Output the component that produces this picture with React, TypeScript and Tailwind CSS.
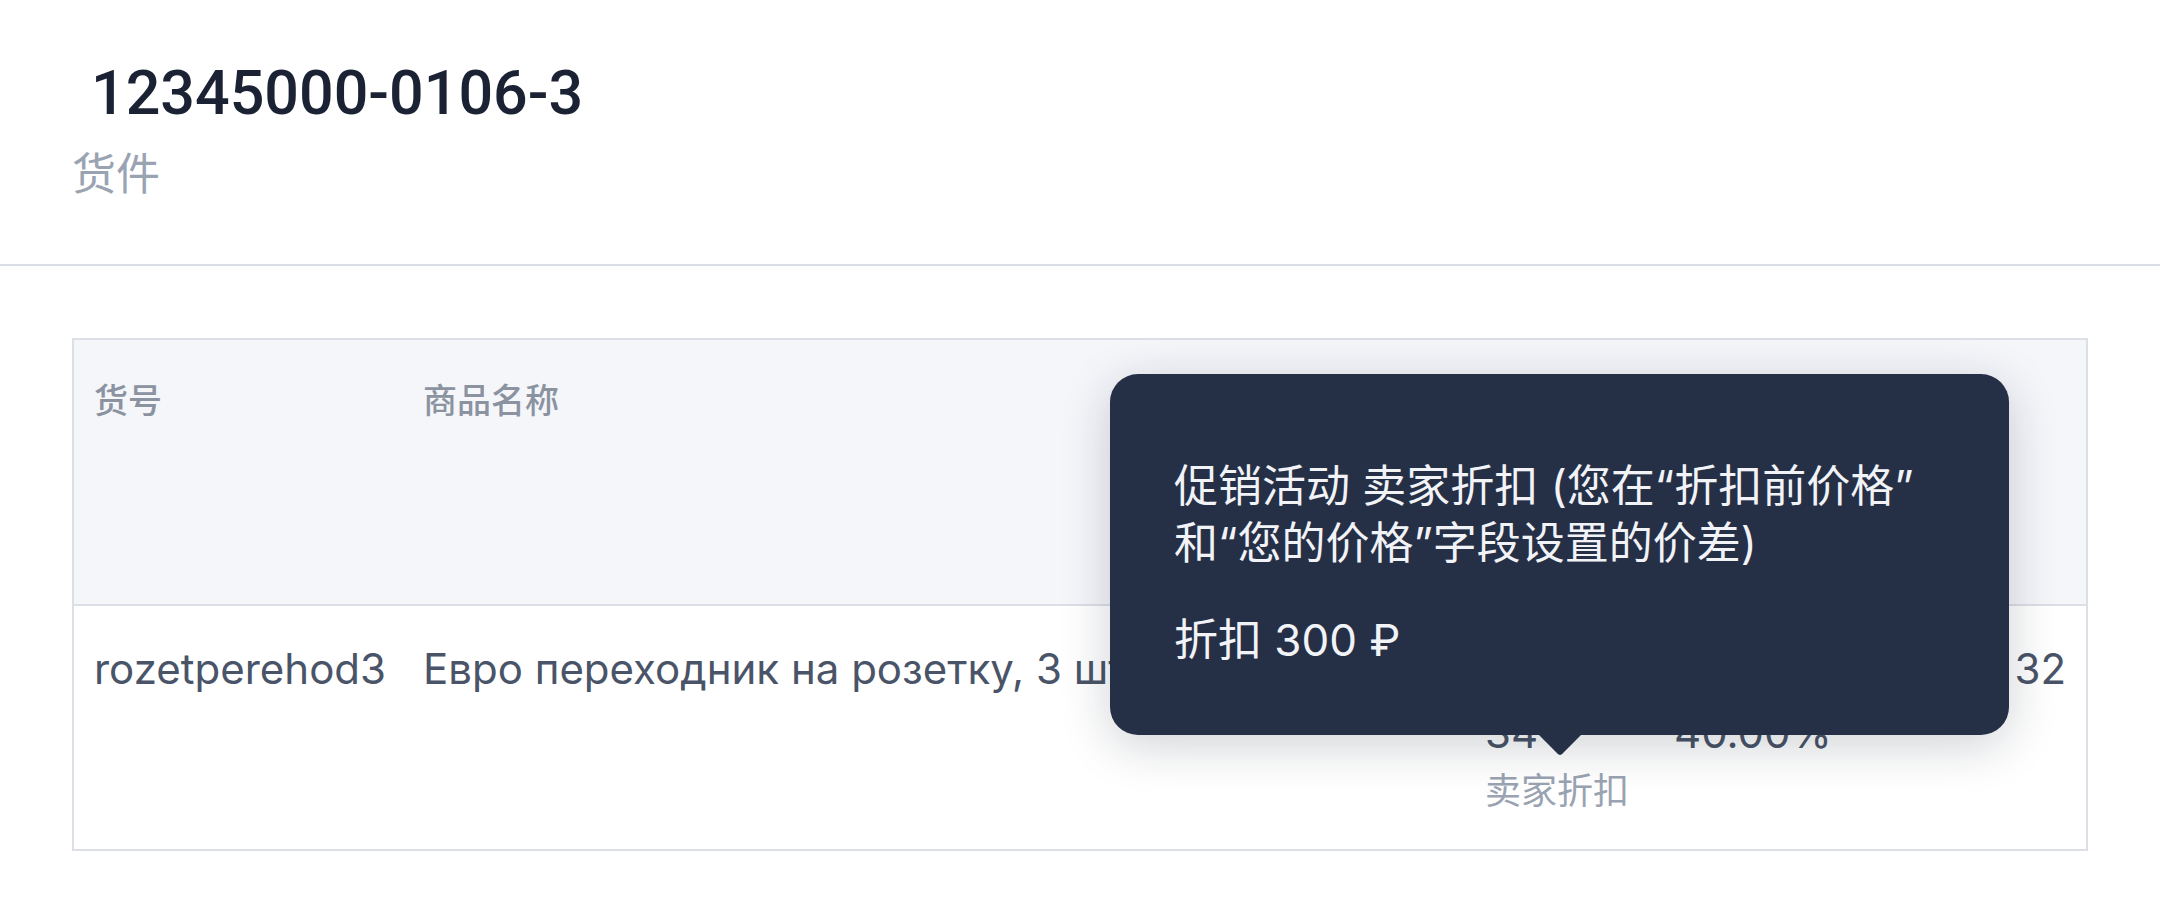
const columns = 'grid grid-cols-[329px_1062px_189px_1fr_186px]'

function Tooltip() {
  return (
    <div className="absolute left-[1036px] top-[34px] w-[899px] rounded-[28px] bg-[#253047] pt-[84px] pb-[66px] px-[64px] text-[44px] leading-[57px] text-[#f1f3f7] shadow-[0_10px_50px_rgba(15,23,42,0.2)]">
      <p className="mb-[40px]">
        促销活动 卖家折扣 (您在“折扣前价格”
        <br />
        和“您的价格”字段设置的价差)
      </p>
      <p>折扣 300 ₽</p>
      <svg
        className="absolute left-[428px] -bottom-[21px]"
        width="44"
        height="22"
        viewBox="0 0 44 22"
      >
        <path d="M0 0 L44 0 L24.6 19.6 Q22 22.2 19.4 19.6 Z" fill="#253047" />
      </svg>
    </div>
  )
}

export default function App() {
  return (
    <div className="min-h-screen bg-white font-['Inter','Noto_Sans_CJK_SC',sans-serif]">
      {/* Page header */}
      <header className="pt-[58px] pb-[60px] px-[72px] border-b-2 border-[#dadde6]">
        <h1 className="ml-[19px] font-['Roboto','Noto_Sans_CJK_SC',sans-serif] text-[61px] leading-[70px] font-medium text-[#1b2233]">
          12345000-0106-3
        </h1>
        <p className="mt-[16px] text-[44px] leading-[60px] text-[#9aa3b2]">货件</p>
      </header>

      {/* Items table */}
      <div className="relative mx-[72px] mt-[72px] border-2 border-[#dcdfe6]">
        <div
          className={`${columns} h-[266px] bg-[#f5f6fa] border-b-2 border-[#dcdfe6] pt-[37px] text-[34px] leading-[48px] font-medium text-[#8b93a1]`}
        >
          <div className="pl-[20px]">货号</div>
          <div className="pl-[20px]">商品名称</div>
          <div />
          <div />
          <div />
        </div>

        <div className={`${columns} h-[243px] text-[42px] leading-[56px] text-[#4a5468]`}>
          <div className="pl-[20px] pt-[35px]">rozetperehod3</div>
          <div className="pl-[20px] pt-[35px] whitespace-nowrap overflow-hidden">
            Евро переходник на розетку, 3 шт
          </div>
          <div className="pl-[20px] pt-[99px]">
            <div className="whitespace-nowrap">34 ₽</div>
            <div className="mt-[6px] text-[36px] leading-[48px] text-[#9aa3b2] whitespace-nowrap">卖家折扣</div>
          </div>
          <div className="pl-[20px] pt-[99px]">
            <div>40.00%</div>
          </div>
          <div className="pr-[20px] pt-[35px] text-right">32</div>
        </div>

        <Tooltip />
      </div>
    </div>
  )
}
